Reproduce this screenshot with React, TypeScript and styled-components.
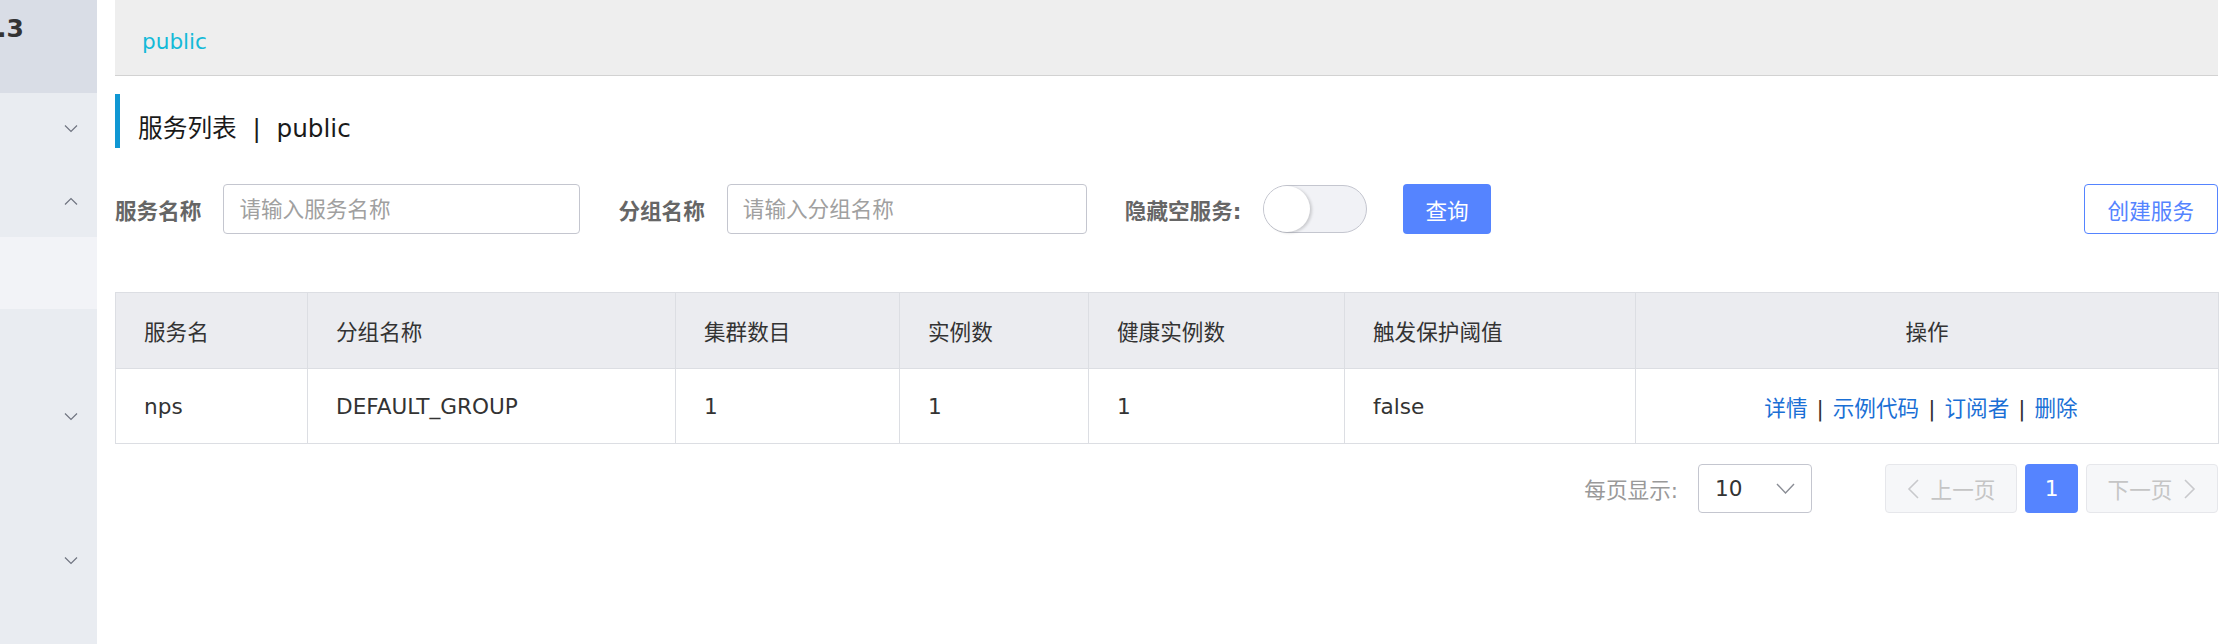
import styled, { createGlobalStyle } from "styled-components";

const GlobalStyle = createGlobalStyle`
  html, body {
    margin: 0;
    padding: 0;
    background: #fff;
  }
  body {
    font-family: "DejaVu Sans", "Noto Sans CJK SC", sans-serif;
    color: #333;
  }
  * {
    box-sizing: border-box;
  }
`;

const columns = [
  { title: "服务名", width: 192 },
  { title: "分组名称", width: 368 },
  { title: "集群数目", width: 224 },
  { title: "实例数", width: 189 },
  { title: "健康实例数", width: 256 },
  { title: "触发保护阈值", width: 291 },
  { title: "操作", width: 583, center: true },
];

const rows = [
  { name: "nps", group: "DEFAULT_GROUP", clusters: 1, instances: 1, healthy: 1, threshold: "false" },
];

const actions = ["详情", "示例代码", "订阅者", "删除"];

const Chevron = ({ up }: { up?: boolean }) => (
  <svg width="14" height="8" viewBox="0 0 14 8">
    <polyline
      points={up ? "1,7.5 7,1.5 13,7.5" : "1,0.5 7,6.5 13,0.5"}
      fill="none"
      stroke="#6f7480"
      strokeWidth="1.2"
    />
  </svg>
);

const App = () => {
  return (
    <Page>
      <GlobalStyle />
      <Sidebar>
        <Logo>.3</Logo>
        <MenuItem><Chevron /></MenuItem>
        <MenuItem><Chevron up /></MenuItem>
        <MenuItem $active />
        <MenuItem />
        <MenuItem><Chevron /></MenuItem>
        <MenuItem />
        <MenuItem><Chevron /></MenuItem>
      </Sidebar>
      <Main>
        <NamespaceBar>public</NamespaceBar>
        <Title>服务列表&nbsp;&nbsp;|&nbsp;&nbsp;public</Title>
        <FilterRow>
          <Label>服务名称</Label>
          <Input placeholder="请输入服务名称" $width={357} />
          <Label $gap>分组名称</Label>
          <Input placeholder="请输入分组名称" $width={360} />
          <Label $gap>隐藏空服务:</Label>
          <Switch>
            <Knob />
          </Switch>
          <PrimaryButton>查询</PrimaryButton>
          <OutlineButton>创建服务</OutlineButton>
        </FilterRow>
        <Table>
          <colgroup>
            {columns.map((c) => (
              <col key={c.title} style={{ width: c.width }} />
            ))}
          </colgroup>
          <thead>
            <tr>
              {columns.map((c) => (
                <Th key={c.title} $center={c.center}>{c.title}</Th>
              ))}
            </tr>
          </thead>
          <tbody>
            {rows.map((r) => (
              <tr key={r.name}>
                <Td>{r.name}</Td>
                <Td>{r.group}</Td>
                <Td>{r.clusters}</Td>
                <Td>{r.instances}</Td>
                <Td>{r.healthy}</Td>
                <Td>{r.threshold}</Td>
                <ActionCell>
                  {actions.map((a, i) => (
                    <span key={a}>
                      {i > 0 && <Sep>|</Sep>}
                      <Link>{a}</Link>
                    </span>
                  ))}
                </ActionCell>
              </tr>
            ))}
          </tbody>
        </Table>
        <Pagination>
          <PageLabel>每页显示:</PageLabel>
          <Select>
            <span>10</span>
            <svg width="19" height="11" viewBox="0 0 19 11">
              <polyline points="1,1 9.5,10 18,1" fill="none" stroke="#8a8d95" strokeWidth="1.4" />
            </svg>
          </Select>
          <PageButton $first>
            <svg width="12" height="20" viewBox="0 0 12 20">
              <polyline points="11,1 2,10 11,19" fill="none" stroke="#c8c9cc" strokeWidth="1.6" />
            </svg>
            上一页
          </PageButton>
          <CurrentPage>1</CurrentPage>
          <PageButton>
            下一页
            <svg width="12" height="20" viewBox="0 0 12 20">
              <polyline points="1,1 10,10 1,19" fill="none" stroke="#c8c9cc" strokeWidth="1.6" />
            </svg>
          </PageButton>
        </Pagination>
      </Main>
    </Page>
  );
};

const Page = styled.div`
  display: flex;
  min-height: 100vh;
  width: 100%;
`;

const Sidebar = styled.div`
  width: 97px;
  flex-shrink: 0;
  background: #e9ecf1;
  display: flex;
  flex-direction: column;
`;

const Logo = styled.div`
  height: 93px;
  background: #d9dde6;
  padding-top: 14px;
  margin-left: -3px;
  font-size: 25px;
  font-weight: bold;
  line-height: 30px;
  color: #333;
`;

const MenuItem = styled.div<{ $active?: boolean }>`
  height: 72px;
  display: flex;
  align-items: center;
  justify-content: flex-end;
  padding-right: 19px;
  background: ${(p) => (p.$active ? "#f2f3f7" : "transparent")};
`;

const Main = styled.div`
  flex: 1;
  padding: 0 6px 0 18px;
  min-width: 0;
`;

const NamespaceBar = styled.div`
  height: 76px;
  background: #eeeeee;
  border-bottom: 1px solid #d2d2d2;
  display: flex;
  align-items: center;
  padding-left: 27px;
  padding-top: 7px;
  font-size: 21.6px;
  color: #14bad8;
`;

const Title = styled.div`
  margin-top: 18px;
  height: 54px;
  border-left: 5px solid #1097d3;
  padding-left: 18px;
  padding-top: 10px;
  display: flex;
  align-items: center;
  font-size: 24.7px;
  color: #1a1a1a;
`;

const FilterRow = styled.div`
  margin-top: 36px;
  height: 50px;
  display: flex;
  align-items: center;
  font-size: 21.6px;
`;

const Label = styled.span<{ $gap?: boolean }>`
  font-weight: bold;
  color: #666;
  margin-left: ${(p) => (p.$gap ? "38px" : "0")};
  margin-right: 22px;
  white-space: nowrap;
`;

const Input = styled.input<{ $width: number }>`
  width: ${(p) => p.$width}px;
  height: 50px;
  border: 1px solid #c4c6cf;
  border-radius: 4px;
  padding: 0 15px;
  font-family: inherit;
  font-size: 21.6px;
  color: #333;
  outline: none;
  &::placeholder {
    color: #a0a0a0;
  }
`;

const Switch = styled.div`
  width: 104px;
  height: 48px;
  border: 1px solid #c4c6cf;
  border-radius: 24px;
  background: #f1f2f6;
  display: flex;
  align-items: center;
`;

const Knob = styled.div`
  width: 46px;
  height: 46px;
  border-radius: 50%;
  background: #fff;
  box-shadow: 2px 1px 3px rgba(0, 0, 0, 0.16);
`;

const PrimaryButton = styled.button`
  margin-left: 36px;
  height: 50px;
  padding: 0 22px;
  border: none;
  border-radius: 4px;
  background: #5584ff;
  color: #fff;
  font-family: inherit;
  font-size: 21.6px;
`;

const OutlineButton = styled.button`
  margin-left: auto;
  height: 50px;
  padding: 0 23px;
  border: 1px solid #5584ff;
  border-radius: 4px;
  background: #fff;
  color: #5584ff;
  font-family: inherit;
  font-size: 21.6px;
`;

const Table = styled.table`
  margin-top: 58px;
  width: 100%;
  table-layout: fixed;
  border-collapse: collapse;
  border: 1px solid #dcdee3;
  font-size: 21.6px;
`;

const Th = styled.th<{ $center?: boolean }>`
  height: 76px;
  padding: 0 28px;
  background: #ebecf0;
  border: 1px solid #dcdee3;
  font-weight: normal;
  color: #333;
  text-align: ${(p) => (p.$center ? "center" : "left")};
`;

const Td = styled.td`
  height: 75px;
  padding: 0 28px;
  border: 1px solid #dcdee3;
  color: #333;
  text-align: left;
`;

const ActionCell = styled(Td)`
  text-align: center;
  padding: 0 40px 0 28px;
`;

const Link = styled.a`
  color: #1a6fd5;
  cursor: pointer;
`;

const Sep = styled.span`
  margin: 0 9px;
  color: #333;
`;

const Pagination = styled.div`
  margin-top: 20px;
  display: flex;
  justify-content: flex-end;
  align-items: center;
  font-size: 21.6px;
`;

const PageLabel = styled.span`
  color: #999;
  margin-right: 20px;
`;

const Select = styled.div`
  width: 114px;
  height: 49px;
  border: 1px solid #c4c6cf;
  border-radius: 4px;
  display: flex;
  align-items: center;
  justify-content: space-between;
  padding: 0 16px 0 16px;
  color: #333;
`;

const PageButton = styled.div<{ $first?: boolean }>`
  margin-left: ${(p) => (p.$first ? "73px" : "8px")};
  width: 132px;
  height: 49px;
  border: 1px solid #e6e7eb;
  border-radius: 4px;
  background: #f6f7f9;
  color: #c5c5c5;
  display: flex;
  align-items: center;
  justify-content: center;
  gap: 12px;
`;

const CurrentPage = styled.div`
  margin-left: 8px;
  width: 53px;
  height: 49px;
  border-radius: 4px;
  background: #5584ff;
  color: #fff;
  display: flex;
  align-items: center;
  justify-content: center;
`;

export default App;
